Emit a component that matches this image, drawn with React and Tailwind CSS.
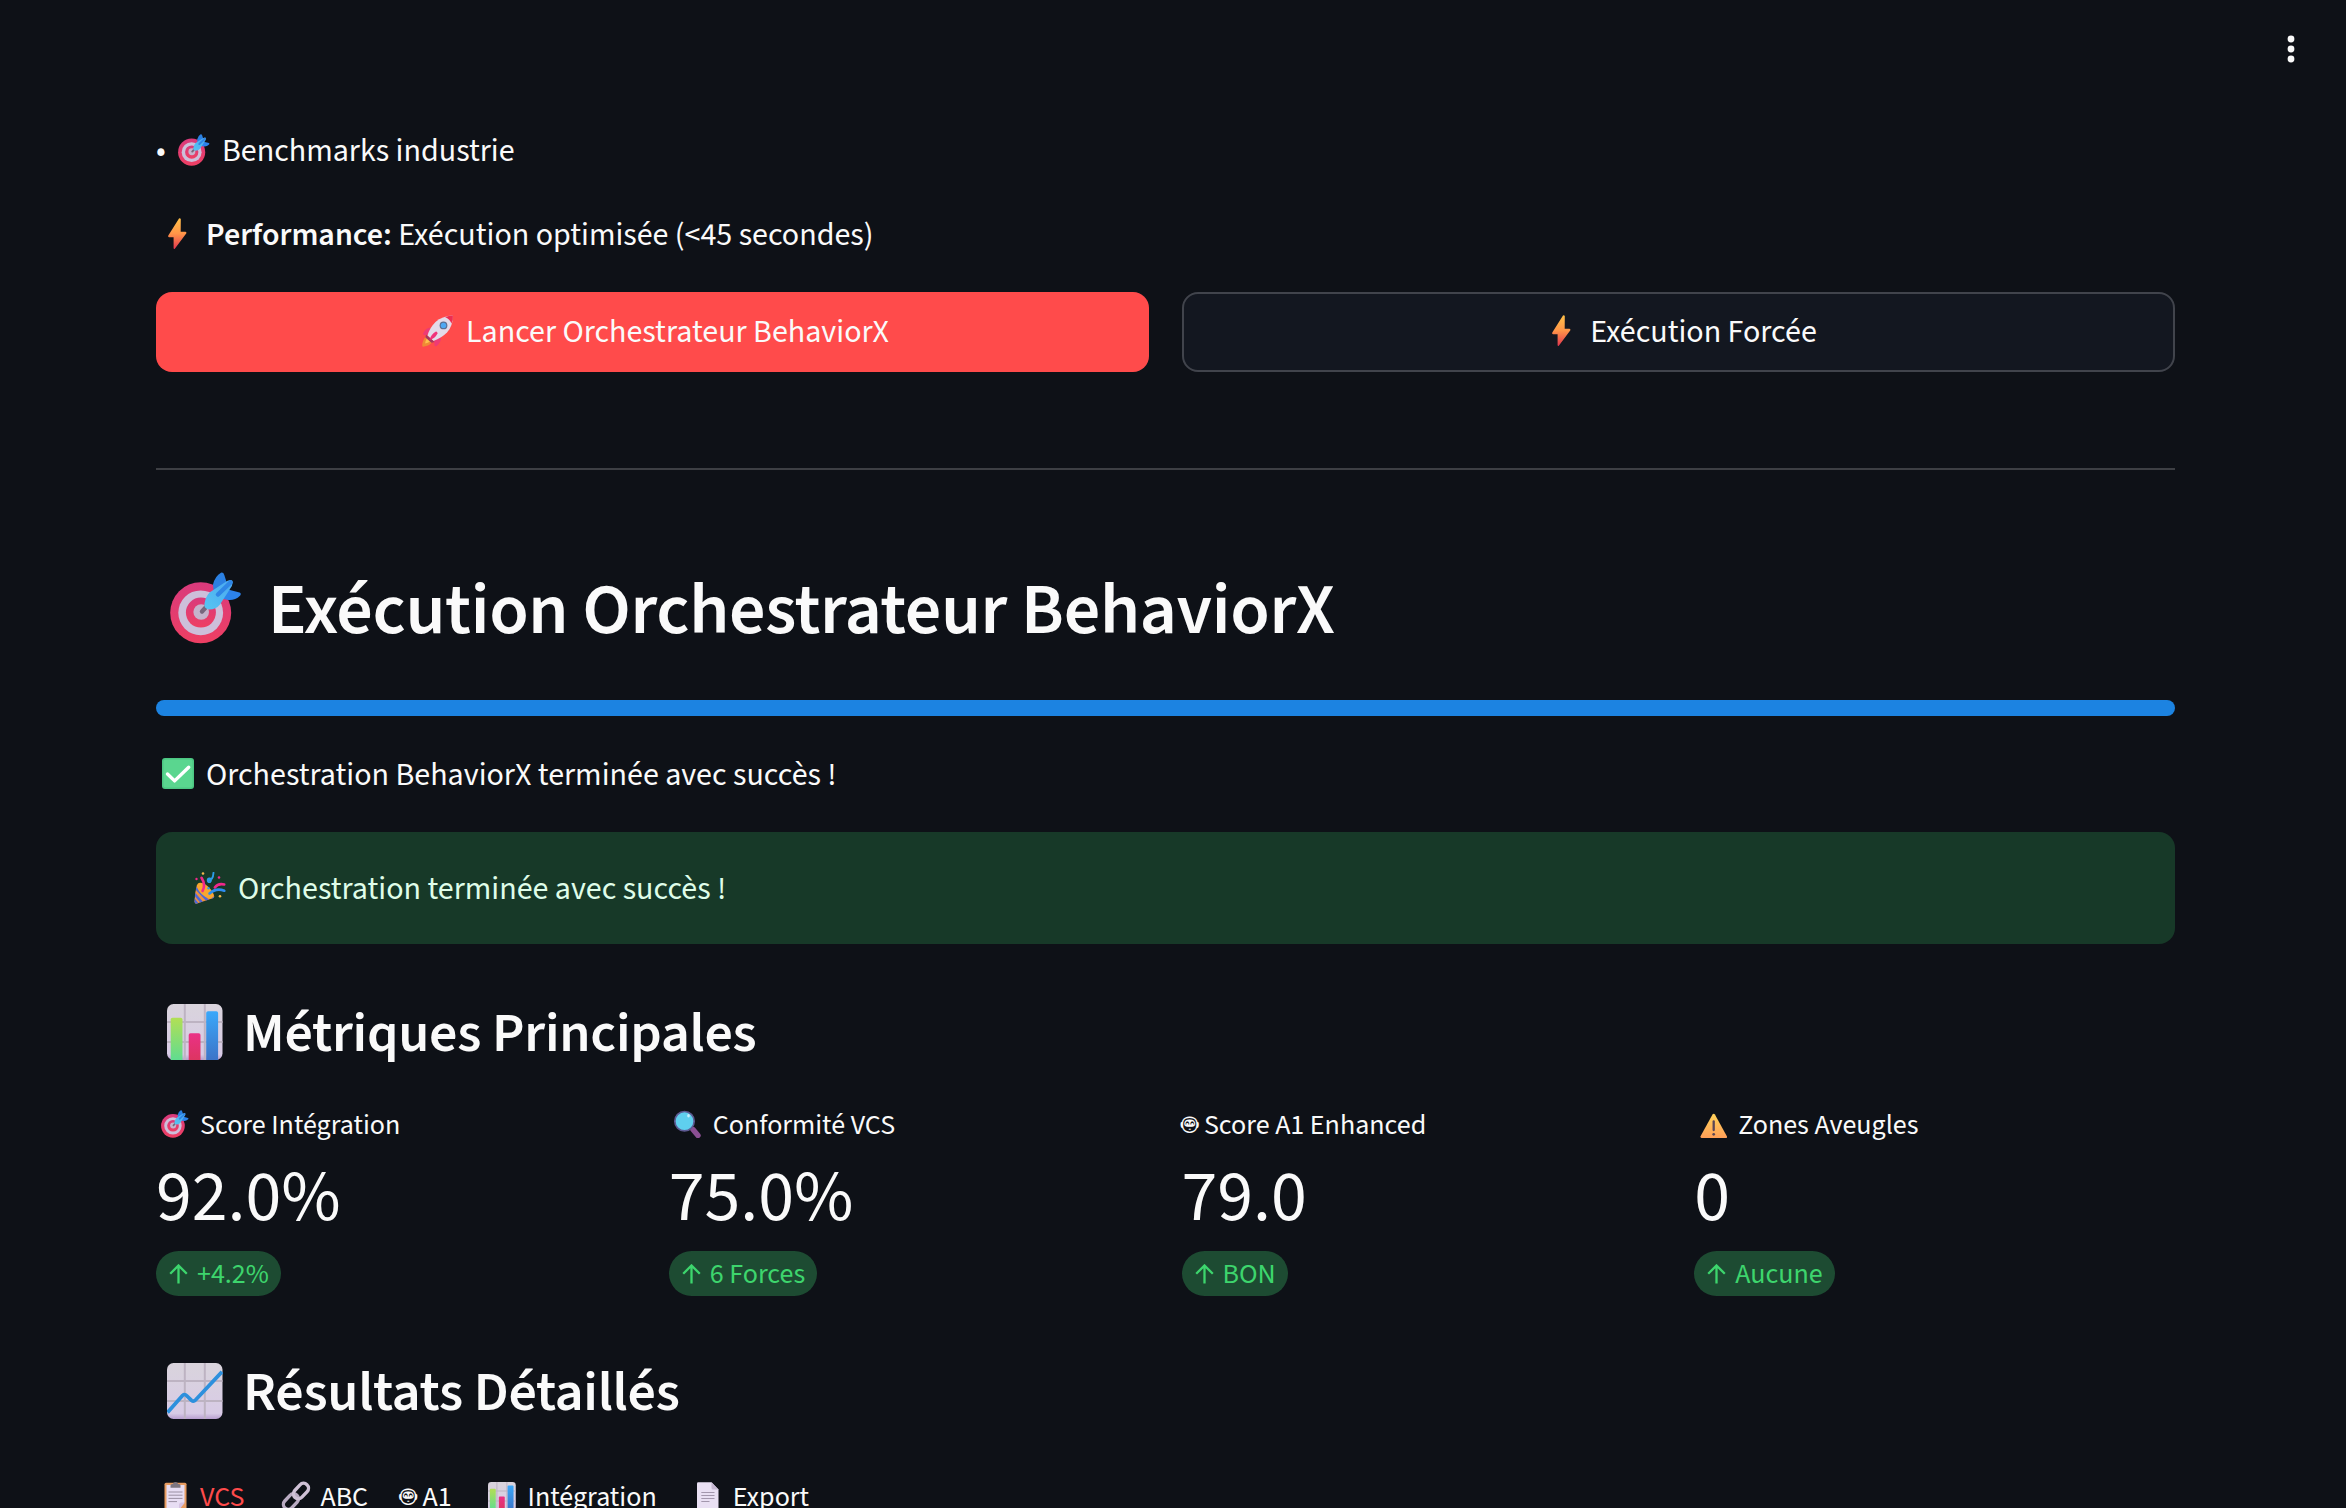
import { useId } from "react";

function Target() {
  const id = useId();
  return (
    <svg viewBox="0 0 72 72" className="size-full">
      <defs>
        <linearGradient id={id + "r"} x1="0" y1="0" x2="0" y2="1">
          <stop offset="0" stopColor="#d93a7c" />
          <stop offset="1" stopColor="#ee3f63" />
        </linearGradient>
        <linearGradient id={id + "b"} x1="1" y1="0" x2="0" y2="1">
          <stop offset="0" stopColor="#4aa6f0" />
          <stop offset="1" stopColor="#56c6f2" />
        </linearGradient>
      </defs>
      <circle cx="30.7" cy="40.8" r="30.5" fill={`url(#${id}r)`} />
      <circle cx="30.7" cy="40.8" r="22.4" fill="#cdbfda" />
      <circle cx="30.9" cy="40.6" r="15" fill={`url(#${id}r)`} />
      <circle cx="31.2" cy="40" r="7.8" fill="#c5b3cc" />
      <path d="M32 39.5 37 34" stroke="#77667d" strokeWidth="4.4" strokeLinecap="round" />
      <path d="M44 23 43 12.500Q45 4 51 .7Q53.500.2 54.300 3L57.500 13Z" fill="#2b80e2" />
      <path d="M58 17.500 69.500 20.500Q71.800 21.600 70 23.700Q65 28.500 58.500 28L48 26Z" fill="#2c83ec" />
      <path d="M34.500 31.500Q35.500 25 39.500 20.500L57 9Q62.500 6.500 62.800 10Q62.500 14 60 17L50 32.500Q46 37.500 39 37.500Q33.500 36.500 34.500 31.500Z" fill={`url(#${id}b)`} />
      <path d="M48 22.500 60.500 10.500" stroke="#2f86e6" strokeWidth="4.500" strokeLinecap="round" />
    </svg>
  );
}

function Bolt() {
  const id = useId();
  return (
    <svg viewBox="0 0 32 32" className="size-full">
      <defs>
        <linearGradient id={id} x1="0" y1="0" x2="0" y2="1">
          <stop offset="0" stopColor="#ffc149" />
          <stop offset=".5" stopColor="#ff9548" />
          <stop offset="1" stopColor="#e2364f" />
        </linearGradient>
      </defs>
      <path d="M17 .5 6.300 17.400Q5.700 19.200 7.300 19.200H11.600V30.200Q12 31.500 13 30.400L24.200 15.600Q24.900 13.800 23.200 13.700H18.700L18.800 1Q18-.4 17 .5Z" fill={`url(#${id})`} />
    </svg>
  );
}

function Rocket() {
  return (
    <svg viewBox="0 0 32 32" className="size-full">
      <path d="M8 12.500Q3 13.500 1.200 18.500Q.8 20.200 2.500 20L8 19.500Z" fill="#ee3a75" />
      <path d="M19 22.500Q19 28 14.500 31Q12.800 31.800 12.500 30L12 24Z" fill="#ee3a75" />
      <path d="M3.500 22Q0 26 .3 31Q.5 32 2 31.600Q7 31 10 27.500Z" fill="#f08a35" />
      <path d="M5 23.500Q3 26 3.200 28.500Q6 28 8 26.500Z" fill="#ffc04e" />
      <path d="M30.800.5Q20 1 13.500 7Q7.500 13 5.500 20.500L11.500 26Q19.500 23 25 17.500Q31 11 30.800.5Z" fill="#e3dbe9" />
      <path d="M30.900.5Q27 .4 23 2Q28 4 29.400 8.500Q31.400 4.500 30.900.5Z" fill="#ee2d50" />
      <path d="M4 19.500 12.500 27 9.500 27.800 3.500 22.500Z" fill="#a7365f" />
      <path d="M14 16.500Q9 19 7.500 25Q13 23.500 15.500 18.500Q15.500 16.500 14 16.500Z" fill="#f0337a" />
      <circle cx="21.500" cy="10.400" r="3.900" fill="#5a7094" />
      <circle cx="21.500" cy="10.400" r="2.700" fill="#4da8f3" />
    </svg>
  );
}

function Check() {
  return (
    <svg viewBox="0 0 32 32" className="size-full">
      <rect width="32" height="31" rx="3" fill="#4cc783" />
      <rect x="1.500" y="1.500" width="29" height="28" rx="2" fill="#5ad68f" />
      <path d="M5.500 16 12.600 22.900 26.700 9.200" fill="none" stroke="#fff" strokeWidth="3.400" strokeLinecap="round" strokeLinejoin="round" />
    </svg>
  );
}

function Party() {
  const id = useId();
  return (
    <svg viewBox="0 0 32 32" className="size-full">
      <defs>
        <clipPath id={id}>
          <path d="M3 12.500Q.6 21 .5 29.800Q.7 32.200 3 31.500L19.500 26Q21 24.500 19 21Z" />
        </clipPath>
      </defs>
      <g clipPath={`url(#${id})`}>
        <rect width="32" height="32" fill="#f0913d" />
        <path d="M-1 13 15 30M-2 19 10 33M-2 25 5 34M3 10 21 28" stroke="#4d68d8" strokeWidth="2.600" />
      </g>
      <ellipse cx="11.200" cy="18.600" rx="10.200" ry="5" transform="rotate(43 11.200 18.600)" fill="#f9a62f" />
      <path d="M8.500 19Q12 13 7.500 5.800" fill="none" stroke="#f0288c" strokeWidth="2.600" strokeLinecap="round" />
      <path d="M14 9.500Q13 6 16 6.500Q18 8 16 10Q13.500 10.500 14 8Q19 9 19.500.8" fill="none" stroke="#2c9de8" strokeWidth="1.900" strokeLinecap="round" />
      <path d="M20.800 15.500Q24 11 30.300 12.500" fill="none" stroke="#f0288c" strokeWidth="2.500" strokeLinecap="round" />
      <path d="M15.500 21.500Q22 15.500 30.300 18.700" fill="none" stroke="#2e8df0" strokeWidth="2.600" strokeLinecap="round" />
      <circle cx="9" cy="1.500" r="1.300" fill="#f5b74b" />
      <circle cx="2.500" cy="7" r="1.200" fill="#f0288c" />
      <circle cx="25" cy="5.500" r="1.300" fill="#f0288c" />
      <circle cx="26" cy="24.200" r="1.300" fill="#f5b74b" />
      <circle cx="14.500" cy="16.300" r="1.200" fill="#2c9de8" />
    </svg>
  );
}

function Paper({ id }) {
  return (
    <>
      <defs>
        <linearGradient id={id + "p"} x1="0" y1="0" x2="0" y2="1">
          <stop offset="0" stopColor="#d9d4dc" />
          <stop offset=".9" stopColor="#d8cbe6" />
          <stop offset="1" stopColor="#b89fd0" />
        </linearGradient>
      </defs>
      <rect width="55.500" height="56" rx="6.500" fill={`url(#${id}p)`} />
      <path d="M17.800 0V56M37.800 0V56M0 18H55.500M0 38H55.500" stroke="#bdb3c2" strokeWidth="2" />
    </>
  );
}

function BarChart() {
  const id = useId();
  return (
    <svg viewBox="0 0 56 56" className="size-full">
      <Paper id={id} />
      <defs>
        <linearGradient id={id + "g"} x1="0" y1="0" x2="0" y2="1">
          <stop offset="0" stopColor="#b2df55" />
          <stop offset="1" stopColor="#60dc90" />
        </linearGradient>
        <linearGradient id={id + "k"} x1="0" y1="0" x2="0" y2="1">
          <stop offset="0" stopColor="#ea3186" />
          <stop offset="1" stopColor="#dd3561" />
        </linearGradient>
        <linearGradient id={id + "b"} x1="0" y1="0" x2="0" y2="1">
          <stop offset="0" stopColor="#3aa8fa" />
          <stop offset="1" stopColor="#3c74c8" />
        </linearGradient>
      </defs>
      <path d="M3.700 56V15.500Q3.700 13.700 5.500 13.700H13.700Q15.500 13.700 15.500 15.500V56Z" fill={`url(#${id}g)`} />
      <path d="M21.700 56V31Q21.700 29.200 23.500 29.200H31.700Q33.500 29.200 33.500 31V56Z" fill={`url(#${id}k)`} />
      <path d="M39.200 56V9Q39.200 7.200 41 7.200H49.300Q51.100 7.200 51.100 9V56Z" fill={`url(#${id}b)`} />
    </svg>
  );
}

function LineChart() {
  const id = useId();
  return (
    <svg viewBox="0 0 56 56" className="size-full">
      <Paper id={id} />
      <path d="M.5 49.500 15.500 32.500Q17.700 30.500 19.500 32.500L24.500 37.300Q26.500 39 28.500 37L55 8.800" fill="none" stroke="#2d90dd" strokeWidth="3.700" />
    </svg>
  );
}

function Magnifier() {
  return (
    <svg viewBox="0 0 28 28" className="size-full">
      <path d="M20 19.500 25 25.500" stroke="#8b4f93" strokeWidth="5.400" strokeLinecap="round" />
      <circle cx="11.500" cy="11.200" r="9.700" fill="#5fcfee" stroke="#5d5a92" strokeWidth="1.700" />
      <ellipse cx="15.500" cy="5.800" rx="1.300" ry="1.700" fill="#c9f1fb" />
    </svg>
  );
}

function Warning() {
  const id = useId();
  return (
    <svg viewBox="0 0 28 28" className="size-full">
      <defs>
        <linearGradient id={id} x1="0" y1="0" x2="0" y2="1">
          <stop offset="0" stopColor="#ffd35a" />
          <stop offset="1" stopColor="#ff9f58" />
        </linearGradient>
      </defs>
      <path d="M13.500 4.500Q14.700 3 15.900 4.500L28 26.500Q28.200 28 26.800 28H2.600Q1.200 28 1.400 26.500Z" fill={`url(#${id})`} />
      <path d="M14.700 11.500V20" stroke="#5b4656" strokeWidth="2.300" strokeLinecap="round" />
      <circle cx="14.700" cy="24.300" r="1.350" fill="#5b4656" />
    </svg>
  );
}

function Clipboard() {
  return (
    <svg viewBox="0 0 28 28" className="size-full">
      <rect x="3.500" y=".8" width="22" height="28" rx="1.500" fill="#e79c60" />
      <path d="M5.500 3H23.500V20L17 28H5.500Z" fill="#e7ddf3" />
      <path d="M18 28V23Q18 20.500 20.500 20.500H24Z" fill="#d6c3e3" />
      <path d="M9.500 5.800V3.500Q9.500 2 11 2H12Q12 0 14.500 0T17 2H18Q19.500 2 19.500 3.500V5.800Z" fill="#7d7580" />
      <path d="M7.500 10H21.500M7.500 13.200H21.500M7.500 16.400H21.500M7.500 19.600H16" stroke="#9a8fa3" strokeWidth="1" />
    </svg>
  );
}

function Link() {
  return (
    <svg viewBox="0 0 28 28" className="size-full overflow-visible">
      <g fill="none" strokeWidth="3.400">
        <rect x="1.200" y="14.600" width="17.500" height="9.800" rx="4.900" transform="rotate(-47 10 19.500)" stroke="#b9abc2" />
        <rect x="11.200" y="4.100" width="17.500" height="9.800" rx="4.900" transform="rotate(-47 20 9)" stroke="#cfc1d6" />
      </g>
    </svg>
  );
}

function Doc() {
  return (
    <svg viewBox="0 0 28 28" className="size-full">
      <path d="M4 1.500Q4 .3 5.200.3H18.500L25.500 7.500V28H4Z" fill="#e9e0f3" />
      <path d="M18.500.3 25.500 7.500H20Q18.500 7.500 18.500 6Z" fill="#c6b8d2" />
      <path d="M8.300 10.500H21.500M8.300 13.500H21.500M8.300 16.500H21.500M8.300 19.500H16.500" stroke="#a397ad" strokeWidth="1" />
    </svg>
  );
}

/* Emoji slots: the icon sits in a box as wide as the glyph plus the following space. */
const BodyEmoji = ({ children }) => (
  <span className="block w-[50px] shrink-0 pl-1.5 pt-[11px]">
    <span className="block size-8">{children}</span>
  </span>
);
const SmallEmoji = ({ children }) => (
  <span className="block w-11 shrink-0 pl-[4.5px] pt-2">
    <span className="block size-7">{children}</span>
  </span>
);

function SectionTitle({ icon, children, className }) {
  return (
    <h3 className={"flex h-[67px] text-[56px] font-semibold leading-[76px] tracking-[-0.005em] " + className}>
      <span className="block w-[87px] shrink-0 pl-[11px] pt-2">
        <span className="block size-14">{icon}</span>
      </span>
      {children}
    </h3>
  );
}

function Metric({ icon, label, value, delta }) {
  return (
    <div className="flex flex-col items-start">
      <div className="flex h-[42px] text-[28px] leading-[46px]">
        {icon}
        <span>{label}</span>
      </div>
      <div className="mt-[5px] h-[86px] text-[72px] leading-[97px]">{value}</div>
      <div className="mt-4 flex h-[45px] gap-[9px] rounded-full bg-[#1d4b32] pl-[13px] pr-3 text-[28px] leading-[46px] text-[#3dd56d]">
        <svg viewBox="0 0 19 20" className="mt-[13px] h-5 w-[19px]">
          <path d="M9.500 19.500V1.800M1.200 9.800 9.500 1.500 17.800 9.800" fill="none" stroke="currentColor" strokeWidth="2.300" />
        </svg>
        <span>{delta}</span>
      </div>
    </div>
  );
}

const Tab = ({ icon, children, active }) => (
  <div className={active ? "flex text-[#ff4b4b]" : "flex"}>
    {icon}
    <span>{children}</span>
  </div>
);

export default function App() {
  return (
    <div className="h-[1508px] w-[2346px] overflow-hidden bg-[#0e1117] font-['Source_Sans_3','Noto_Sans_CJK_SC',sans-serif] text-[#fafafa]">
      <header className="flex h-[123px] justify-end pr-[47px] pt-[33px]">
        <svg viewBox="0 0 16 32" className="h-8 w-4" fill="#fafafa">
          <circle cx="8" cy="6" r="3.400" />
          <circle cx="8" cy="16" r="3.400" />
          <circle cx="8" cy="26" r="3.400" />
        </svg>
      </header>
      <main className="ml-[156px] w-[2019px] whitespace-nowrap text-[32px] leading-[56px]">
        <p className="flex h-[51px]">
          <span className="w-4 shrink-0">•</span>
          <BodyEmoji><Target /></BodyEmoji>
          <span>Benchmarks industrie</span>
        </p>
        <p className="mt-[33px] flex h-[51px]">
          <BodyEmoji><Bolt /></BodyEmoji>
          <span><strong className="font-semibold">Performance:</strong> Exécution optimisée (&lt;45 secondes)</span>
        </p>

        <div className="mt-[34px] grid grid-cols-2 gap-[33px]">
          <button className="flex h-20 justify-center rounded-2xl bg-[#ff4b4b] pt-3">
            <BodyEmoji><Rocket /></BodyEmoji>
            <span>Lancer Orchestrateur BehaviorX</span>
          </button>
          <button className="flex h-20 justify-center rounded-2xl border-2 border-[#41444c] bg-[#131720] pt-2.5">
            <BodyEmoji><Bolt /></BodyEmoji>
            <span>Exécution Forcée</span>
          </button>
        </div>

        <hr className="mt-24 h-0.5 border-0 bg-[#3d3f44]" />

        <h2 className="mt-[92px] flex h-[86px] text-[72px] font-semibold leading-[97px] tracking-[-0.005em]">
          <span className="block w-[112px] shrink-0 pl-3.5 pt-2.5">
            <span className="block size-[72px]"><Target /></span>
          </span>
          Exécution Orchestrateur BehaviorX
        </h2>

        <div className="mt-[52px] h-4 rounded-full bg-[#1c83e1]" />

        <p className="mt-[31px] flex h-[51px]">
          <BodyEmoji><Check /></BodyEmoji>
          <span>Orchestration BehaviorX terminée avec succès !</span>
        </p>

        <div className="mt-[34px] flex h-28 rounded-2xl bg-[#173928] pl-8 pt-[29px] text-[#dffde9]">
          <BodyEmoji><Party /></BodyEmoji>
          <span>Orchestration terminée avec succès !</span>
        </div>

        <SectionTitle className="mt-[52px]" icon={<BarChart />}>Métriques Principales</SectionTitle>

        <div className="mt-[39px] grid grid-cols-4 gap-8">
          <Metric icon={<SmallEmoji><Target /></SmallEmoji>} label="Score Intégration" value="92.0%" delta="+4.2%" />
          <Metric icon={<SmallEmoji><Magnifier /></SmallEmoji>} label="Conformité VCS" value="75.0%" delta="6 Forces" />
          <Metric label="🤖 Score A1 Enhanced" value="79.0" delta="BON" />
          <Metric icon={<SmallEmoji><Warning /></SmallEmoji>} label="Zones Aveugles" value="0" delta="Aucune" />
        </div>

        <SectionTitle className="mt-[59px]" icon={<LineChart />}>Résultats Détaillés</SectionTitle>

        <nav className="mt-[52px] flex h-[42px] gap-8 text-[28px] leading-[46px]">
          <Tab active icon={<SmallEmoji><Clipboard /></SmallEmoji>}>VCS</Tab>
          <Tab icon={<SmallEmoji><Link /></SmallEmoji>}>ABC</Tab>
          <Tab>🤖 A1</Tab>
          <Tab icon={<SmallEmoji><BarChart /></SmallEmoji>}>Intégration</Tab>
          <Tab icon={<SmallEmoji><Doc /></SmallEmoji>}>Export</Tab>
        </nav>
      </main>
    </div>
  );
}
